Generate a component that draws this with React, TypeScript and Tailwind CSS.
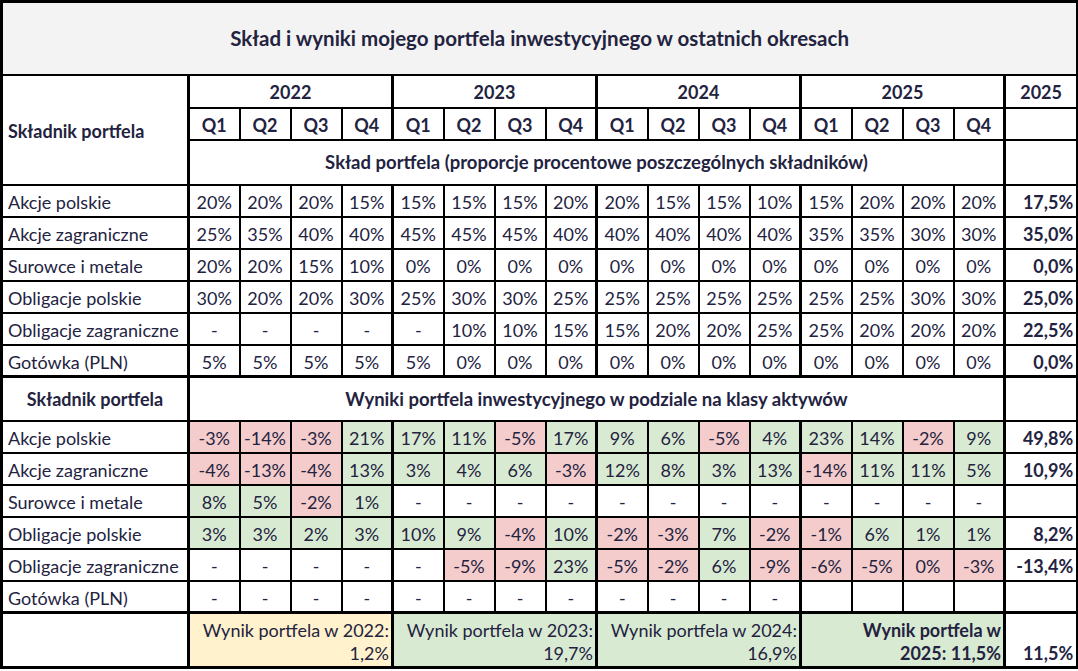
import React from "react";

const years = ["2022", "2023", "2024", "2025"];
const quarters = ["Q1", "Q2", "Q3", "Q4"];

type Row = { name: string; vals: string[]; total: string };

const sklad: Row[] = [
  { name: "Akcje polskie", vals: ["20%", "20%", "20%", "15%", "15%", "15%", "15%", "20%", "20%", "15%", "15%", "10%", "15%", "20%", "20%", "20%"], total: "17,5%" },
  { name: "Akcje zagraniczne", vals: ["25%", "35%", "40%", "40%", "45%", "45%", "45%", "40%", "40%", "40%", "40%", "40%", "35%", "35%", "30%", "30%"], total: "35,0%" },
  { name: "Surowce i metale", vals: ["20%", "20%", "15%", "10%", "0%", "0%", "0%", "0%", "0%", "0%", "0%", "0%", "0%", "0%", "0%", "0%"], total: "0,0%" },
  { name: "Obligacje polskie", vals: ["30%", "20%", "20%", "30%", "25%", "30%", "30%", "25%", "25%", "25%", "25%", "25%", "25%", "25%", "30%", "30%"], total: "25,0%" },
  { name: "Obligacje zagraniczne", vals: ["-", "-", "-", "-", "-", "10%", "10%", "15%", "15%", "20%", "20%", "25%", "25%", "20%", "20%", "20%"], total: "22,5%" },
  { name: "Gotówka (PLN)", vals: ["5%", "5%", "5%", "5%", "5%", "0%", "0%", "0%", "0%", "0%", "0%", "0%", "0%", "0%", "0%", "0%"], total: "0,0%" },
];

const wyniki: Row[] = [
  { name: "Akcje polskie", vals: ["-3%", "-14%", "-3%", "21%", "17%", "11%", "-5%", "17%", "9%", "6%", "-5%", "4%", "23%", "14%", "-2%", "9%"], total: "49,8%" },
  { name: "Akcje zagraniczne", vals: ["-4%", "-13%", "-4%", "13%", "3%", "4%", "6%", "-3%", "12%", "8%", "3%", "13%", "-14%", "11%", "11%", "5%"], total: "10,9%" },
  { name: "Surowce i metale", vals: ["8%", "5%", "-2%", "1%", "-", "-", "-", "-", "-", "-", "-", "-", "-", "-", "-", "-"], total: "" },
  { name: "Obligacje polskie", vals: ["3%", "3%", "2%", "3%", "10%", "9%", "-4%", "10%", "-2%", "-3%", "7%", "-2%", "-1%", "6%", "1%", "1%"], total: "8,2%" },
  { name: "Obligacje zagraniczne", vals: ["-", "-", "-", "-", "-", "-5%", "-9%", "23%", "-5%", "-2%", "6%", "-9%", "-6%", "-5%", "0%", "-3%"], total: "-13,4%" },
  { name: "Gotówka (PLN)", vals: ["-", "-", "-", "-", "-", "-", "-", "-", "-", "-", "-", "-", "", "", "", ""], total: "" },
];

function tone(v: string) {
  if (v === "" || v === "-") return "bg-white";
  if (v.startsWith("-") || v === "0%") return "bg-[#f4cccc]";
  return "bg-[#d9ead3]";
}

const cell = "border-2 border-black";

function DataRow({ row, colored }: { row: Row; colored?: boolean }) {
  return (
    <tr className="h-[32px]">
      <td className={`${cell} border-r-[3px] pl-[5px] pt-[3px] text-left whitespace-nowrap`}>{row.name}</td>
      {row.vals.map((v, i) => (
        <td
          key={i}
          className={`${cell} ${i % 4 === 0 ? "border-l-[3px]" : ""} pt-[3px] text-center ${colored ? tone(v) : ""}`}
        >
          {v}
        </td>
      ))}
      <td className={`${cell} border-l-[3px] pr-[3px] pt-[3px] text-right font-bold`}>{row.total}</td>
    </tr>
  );
}

export default function App() {
  return (
    <div className="bg-white w-[1078px] h-[671px] text-[#23233f] text-[18px] leading-none" style={{ fontFamily: "Lato, 'Liberation Sans', sans-serif" }}>
      <table className="table-fixed border-collapse border-[3px] border-black w-[1076px]">
        <colgroup>
          <col className="w-[187px]" />
          {Array.from({ length: 16 }).map((_, i) => (
            <col key={i} className="w-[51px]" />
          ))}
          <col className="w-[73px]" />
        </colgroup>
        <tbody>
          <tr className="h-[73px]">
            <td colSpan={18} className={`${cell} bg-[#f3f3f3] text-center font-bold text-[20.5px]`}>
              Skład i wyniki mojego portfela inwestycyjnego w ostatnich okresach
            </td>
          </tr>
          <tr className="h-[33px]">
            <td rowSpan={3} className={`${cell} border-r-[3px] pl-[5px] pt-[2px] text-left font-bold`}>
              Składnik portfela
            </td>
            {years.map((y) => (
              <td key={y} colSpan={4} className={`${cell} border-l-[3px] pt-[2px] text-center font-bold`}>
                {y}
              </td>
            ))}
            <td className={`${cell} border-l-[3px] pt-[2px] text-center font-bold`}>2025</td>
          </tr>
          <tr className="h-[32px]">
            {years.map((y) =>
              quarters.map((q, i) => (
                <td key={y + q} className={`${cell} ${i === 0 ? "border-l-[3px]" : ""} pt-[2px] text-center font-bold`}>
                  {q}
                </td>
              ))
            )}
            <td className={`${cell} border-l-[3px]`} />
          </tr>
          <tr className="h-[45px]">
            <td colSpan={16} className={`${cell} border-l-[3px] text-center font-bold text-[18.5px]`}>
              Skład portfela (proporcje procentowe poszczególnych składników)
            </td>
            <td className={`${cell} border-l-[3px]`} />
          </tr>
          {sklad.map((r) => (
            <DataRow key={r.name} row={r} />
          ))}
          <tr className="h-[44px]">
            <td className={`${cell} border-t-[3px] border-r-[3px] text-center font-bold`}>Składnik portfela</td>
            <td colSpan={16} className={`${cell} border-t-[3px] border-l-[3px] text-center font-bold text-[18.5px]`}>
              Wyniki portfela inwestycyjnego w podziale na klasy aktywów
            </td>
            <td className={`${cell} border-t-[3px] border-l-[3px]`} />
          </tr>
          {wyniki.map((r) => (
            <DataRow key={r.name} row={r} colored />
          ))}
          <tr className="h-[55px] leading-[23px]">
            <td className={`${cell} border-t-[3px] border-r-[3px]`} />
            <td colSpan={4} className={`${cell} border-t-[3px] border-l-[3px] bg-[#fff2cc] text-right align-bottom pr-[2px] pb-[1px]`}>
              Wynik portfela w 2022:
              <br />
              1,2%
            </td>
            <td colSpan={4} className={`${cell} border-t-[3px] border-l-[3px] bg-[#d9ead3] text-right align-bottom pr-[2px] pb-[1px]`}>
              Wynik portfela w 2023:
              <br />
              19,7%
            </td>
            <td colSpan={4} className={`${cell} border-t-[3px] border-l-[3px] bg-[#d9ead3] text-right align-bottom pr-[2px] pb-[1px]`}>
              Wynik portfela w 2024:
              <br />
              16,9%
            </td>
            <td colSpan={4} className={`${cell} border-t-[3px] border-l-[3px] bg-[#d9ead3] text-right align-bottom pr-[2px] pb-[1px] font-bold`}>
              Wynik portfela w
              <br />
              2025: 11,5%
            </td>
            <td className={`${cell} border-t-[3px] border-l-[3px] text-right align-bottom pr-[3px] pb-[1px] font-bold`}>11,5%</td>
          </tr>
        </tbody>
      </table>
    </div>
  );
}
